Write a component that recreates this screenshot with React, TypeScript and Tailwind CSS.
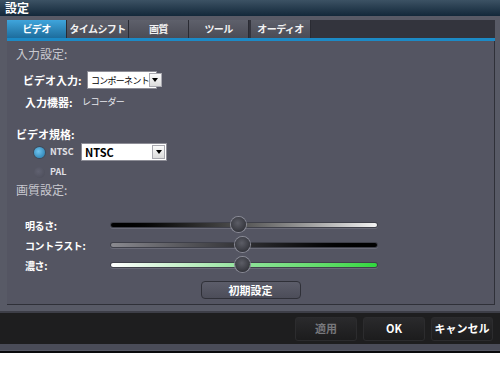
const JP = "font-['Noto_Sans_CJK_JP','Noto_Sans',sans-serif]";

const tabs = ["ビデオ", "タイムシフト", "画質", "ツール", "オーディオ"];

function Select({ value, width, big }: { value: string; width: string; big?: boolean }) {
  return (
    <div
      className={`${width} flex h-[18px] items-center justify-between border border-[#8d8d96] bg-white pl-[3px] pr-[1px]`}
    >
      <span
        className={`${big ? "text-[11px] font-bold" : "text-[9px] tracking-[-0.08em]"} whitespace-nowrap leading-none text-black`}
      >
        {value}
      </span>
      <span className="flex h-[14px] w-[13px] shrink-0 items-center justify-center border border-[#a9a9b0] bg-gradient-to-b from-[#fbfbfb] to-[#dcdcdc]">
        <span className="h-0 w-0 border-x-[3px] border-t-[4px] border-x-transparent border-t-black" />
      </span>
    </div>
  );
}

function Radio({ on, label }: { on?: boolean; label: string }) {
  return (
    <div className="flex h-[20px] items-center gap-[5px] pl-[18px]">
      <span
        className={`h-[11px] w-[11px] rounded-full ${on ? "bg-[radial-gradient(circle_at_40%_40%,#6fc3ee,#1f76a8)] shadow-[0_0_0_1px_#3c4a5a]" : "bg-[radial-gradient(circle_at_40%_40%,#606170,#4a4b57)]"}`}
      />
      <span className="text-[9px] font-bold text-[#e0e0e6]">{label}</span>
    </div>
  );
}

function Slider({ label, track, pos }: { label: string; track: string; pos: number }) {
  return (
    <div className="flex h-[20px] items-center">
      <span className="w-[94px] whitespace-nowrap pl-[9px] text-[10px] font-bold tracking-[-0.04em] text-white">
        {label}
      </span>
      <div className="relative h-[6px] w-[268px] rounded-full bg-[#3f404a] p-[1px] shadow-[0_1px_0_#6a6b78]">
        <div className={`h-full w-full rounded-full ${track}`} />
        <span
          className="absolute top-[-5px] h-[15px] w-[15px] rounded-full bg-[radial-gradient(circle_at_45%_40%,#5c5d66,#26272d)] shadow-[0_0_0_1px_#8a8b96]"
          style={{ left: pos }}
        />
      </div>
    </div>
  );
}

function FooterButton({ label, dim }: { label: string; dim?: boolean }) {
  return (
    <div
      className={`flex h-[24px] w-[62px] items-center justify-center rounded-[3px] border border-[#2c2c2e] bg-gradient-to-b from-[#2a2a2c] to-[#1c1c1d] text-[11px] font-bold ${dim ? "text-[#77787c]" : "text-white"}`}
    >
      {label}
    </div>
  );
}

export default function App() {
  return (
    <div className={`h-[379px] w-[500px] bg-white ${JP}`}>
      <div className="flex h-[353px] flex-col bg-[#585a66] shadow-[inset_0_-2px_0_#0a0a0c]">
        <div className="flex h-[16px] items-center bg-gradient-to-b from-[#3c5264] to-[#13283a] pl-[5px] text-[12px] font-bold leading-none text-white">
          設定
        </div>
        <div className="flex flex-col pl-[7px] pr-[5px] pt-[4px]">
          <div className="flex h-[18px] bg-[#33343d]">
            {tabs.map((t, i) => (
              <div
                key={t}
                className={`flex w-[60px] items-center justify-center whitespace-nowrap border-r border-[#2a2b33] text-[10px] font-bold leading-none tracking-[-0.06em] ${i === 0 ? "bg-gradient-to-b from-[#3fa5dc] to-[#1d6d9d] text-white" : "bg-gradient-to-b from-[#5e606b] to-[#4b4c56] text-[#f2f2f2]"} ${i === 1 ? "w-[62px]" : ""} ${i === 4 ? "ml-[2px]" : ""}`}
              >
                {t}
              </div>
            ))}
          </div>
          <div className="h-[3px] bg-[#1c8ac6]" />
          <div className="flex h-[264px] flex-col border-b border-r border-[#2f3038] bg-[#545562] pl-[9px] pt-[5px] text-[11px]">
            <div className="h-[16px] text-[12px] leading-[16px] text-[#c9c9d0]">入力設定:</div>
            <div className="mt-[9px] flex h-[18px] items-center">
              <span className="w-[71px] whitespace-nowrap pl-[7px] font-bold text-white">ビデオ入力:</span>
              <Select value="コンポーネント" width="w-[70px]" />
            </div>
            <div className="mt-[5px] flex h-[16px] items-center">
              <span className="w-[66px] whitespace-nowrap pl-[9px] font-bold text-white">入力機器:</span>
              <span className="text-[9px] tracking-[-0.06em] text-[#e8e8ee]">レコーダー</span>
            </div>
            <div className="mt-[16px] flex h-[16px] items-center font-bold text-white">ビデオ規格:</div>
            <div className="flex">
              <div className="flex w-[65px] flex-col">
                <Radio on label="NTSC" />
                <Radio label="PAL" />
              </div>
              <div className="pt-[1px]">
                <Select value="NTSC" width="w-[86px]" big />
              </div>
            </div>
            <div className="h-[16px] text-[12px] leading-[16px] text-[#c9c9d0]">画質設定:</div>
            <div className="mt-[17px] flex flex-col">
              <Slider label="明るさ:" track="bg-gradient-to-r from-black via-[#555] to-[#f4f4f4]" pos={121} />
              <Slider label="コントラスト:" track="bg-gradient-to-r from-[#8a8a90] via-[#303034] to-black" pos={125} />
              <Slider label="濃さ:" track="bg-gradient-to-r from-white via-[#8fe29a] to-[#2fd83c]" pos={125} />
            </div>
            <div className="mt-[6px] flex justify-center pr-[9px]">
              <div className="flex h-[18px] w-[100px] items-center justify-center rounded-[4px] border border-[#2f3038] bg-gradient-to-b from-[#5c5d6a] to-[#4c4d59] text-[11px] font-bold text-white">
                初期設定
              </div>
            </div>
          </div>
        </div>
        <div className="mt-[6px] h-[2px] bg-[#3d3e47]" />
        <div className="flex h-[31px] items-center justify-end gap-[6px] bg-[#1e1e1f] pr-[7px]">
          <FooterButton label="適用" dim />
          <FooterButton label="OK" />
          <FooterButton label="キャンセル" />
        </div>
        <div className="h-[6px] bg-[#4a4c58]" />
      </div>
    </div>
  );
}
